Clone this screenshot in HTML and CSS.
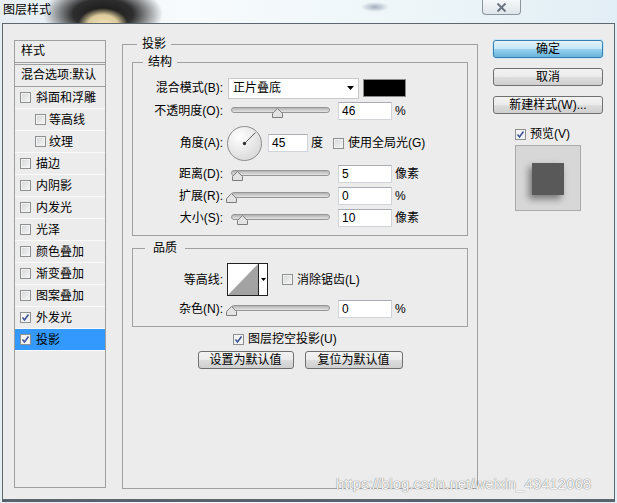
FILE: index.html
```html
<!DOCTYPE html>
<html lang="zh-CN">
<head>
    <meta charset="UTF-8">
    <meta name="viewport" content="width=device-width, initial-scale=1.0">
    <title>图层样式</title>
    <link rel="stylesheet" href="styles.css">
</head>
<body>

    <div class="titlebar">
        <span class="title">图层样式</span>
        <span class="close">
            <svg width="11" height="9" viewBox="0 0 11 9"><path d="M1.5 0.5 L9.5 8.5 M9.5 0.5 L1.5 8.5" stroke="#6b7580" stroke-width="2"/></svg>
        </span>
    </div>

    <div class="dialog">

        <div class="styles-list">
            <div class="list-head">样式</div>
            <div class="list-blend">混合选项:默认</div>
            <div class="item"><span class="cb"></span>斜面和浮雕</div>
            <div class="item sub"><span class="cb"></span>等高线</div>
            <div class="item sub"><span class="cb"></span>纹理</div>
            <div class="item"><span class="cb"></span>描边</div>
            <div class="item"><span class="cb"></span>内阴影</div>
            <div class="item"><span class="cb"></span>内发光</div>
            <div class="item"><span class="cb"></span>光泽</div>
            <div class="item"><span class="cb"></span>颜色叠加</div>
            <div class="item"><span class="cb"></span>渐变叠加</div>
            <div class="item"><span class="cb"></span>图案叠加</div>
            <div class="item"><span class="cb on"><svg width="9" height="9" viewBox="0 0 9 9"><path d="M1.5 4.5 L3.5 7 L7.5 1.5" stroke="#3b5597" stroke-width="1.6" fill="none"/></svg></span>外发光</div>
            <div class="item selected"><span class="cb on"><svg width="9" height="9" viewBox="0 0 9 9"><path d="M1.5 4.5 L3.5 7 L7.5 1.5" stroke="#3b5597" stroke-width="1.6" fill="none"/></svg></span>投影</div>
        </div>

        <fieldset class="group main">
            <legend>投影</legend>

            <fieldset class="group structure">
                <legend>结构</legend>

                <div class="row">
                    <span class="lbl">混合模式(B):</span>
                    <div class="select">正片叠底
                        <svg width="7" height="4" viewBox="0 0 7 4"><path d="M0 0 H7 L3.5 4 Z" fill="#000"/></svg>
                    </div>
                    <div class="swatch"></div>
                </div>

                <div class="row r2">
                    <span class="lbl">不透明度(O):</span>
                    <div class="slider"><div class="track"></div><svg class="thumb" style="left: 46px" width="11" height="10" viewBox="0 0 11 10"><path d="M0.5 9.5 V5.5 L5.5 0.5 L10.5 5.5 V9.5 Z" fill="#e3e3e3" stroke="#7c7c7c"/></svg></div>
                    <div class="num">46</div>
                    <span class="unit">%</span>
                </div>

                <div class="row r3">
                    <span class="lbl">角度(A):</span>
                    <svg class="dial" width="35" height="35" viewBox="0 0 35 35">
                        <defs>
                            <radialGradient id="dialFill" cx="35%" cy="30%" r="75%">
                                <stop offset="0" stop-color="#ffffff"/>
                                <stop offset="1" stop-color="#d9d9d9"/>
                            </radialGradient>
                        </defs>
                        <circle cx="17.5" cy="17.5" r="17" fill="url(#dialFill)" stroke="#8d8d8d"/>
                        <line x1="17.5" y1="17.5" x2="28.5" y2="6.5" stroke="#5a5a5a"/>
                        <circle cx="17.5" cy="17.5" r="1.7" fill="#333"/>
                    </svg>
                    <div class="num angle">45</div>
                    <span class="unit">度</span>
                    <span class="cb global"></span>
                    <span class="cb-text">使用全局光(G)</span>
                </div>

                <div class="row r4">
                    <span class="lbl">距离(D):</span>
                    <div class="slider"><div class="track"></div><svg class="thumb" style="left: 6px" width="11" height="10" viewBox="0 0 11 10"><path d="M0.5 9.5 V5.5 L5.5 0.5 L10.5 5.5 V9.5 Z" fill="#e3e3e3" stroke="#7c7c7c"/></svg></div>
                    <div class="num">5</div>
                    <span class="unit">像素</span>
                </div>

                <div class="row">
                    <span class="lbl">扩展(R):</span>
                    <div class="slider"><div class="track"></div><svg class="thumb" style="left: 0px" width="11" height="10" viewBox="0 0 11 10"><path d="M0.5 9.5 V5.5 L5.5 0.5 L10.5 5.5 V9.5 Z" fill="#e3e3e3" stroke="#7c7c7c"/></svg></div>
                    <div class="num">0</div>
                    <span class="unit">%</span>
                </div>

                <div class="row">
                    <span class="lbl">大小(S):</span>
                    <div class="slider"><div class="track"></div><svg class="thumb" style="left: 11px" width="11" height="10" viewBox="0 0 11 10"><path d="M0.5 9.5 V5.5 L5.5 0.5 L10.5 5.5 V9.5 Z" fill="#e3e3e3" stroke="#7c7c7c"/></svg></div>
                    <div class="num">10</div>
                    <span class="unit">像素</span>
                </div>
            </fieldset>

            <fieldset class="group quality">
                <legend>品质</legend>

                <div class="row contour-row">
                    <span class="lbl">等高线:</span>
                    <div class="contour">
                        <svg class="contour-preview" width="30" height="31" viewBox="0 0 30 31"><path d="M0 31 L30 0 V31 Z" fill="#a3a3a3"/></svg>
                        <span class="contour-arrow"><svg width="5" height="3" viewBox="0 0 5 3"><path d="M0 0 H5 L2.5 3 Z" fill="#000"/></svg></span>
                    </div>
                    <span class="cb aa"></span>
                    <span class="cb-text">消除锯齿(L)</span>
                </div>

                <div class="row r-noise">
                    <span class="lbl">杂色(N):</span>
                    <div class="slider"><div class="track"></div><svg class="thumb" style="left: 0px" width="11" height="10" viewBox="0 0 11 10"><path d="M0.5 9.5 V5.5 L5.5 0.5 L10.5 5.5 V9.5 Z" fill="#e3e3e3" stroke="#7c7c7c"/></svg></div>
                    <div class="num">0</div>
                    <span class="unit">%</span>
                </div>
            </fieldset>

            <div class="knockout">
                <span class="cb on"><svg width="9" height="9" viewBox="0 0 9 9"><path d="M1.5 4.5 L3.5 7 L7.5 1.5" stroke="#3b5597" stroke-width="1.6" fill="none"/></svg></span>
                <span class="cb-text">图层挖空投影(U)</span>
            </div>

            <div class="defaults">
                <button class="btn small">设置为默认值</button>
                <button class="btn small wide">复位为默认值</button>
            </div>
        </fieldset>

        <div class="actions">
            <button class="btn primary">确定</button>
            <button class="btn">取消</button>
            <button class="btn">新建样式(W)...</button>
            <div class="preview-toggle">
                <span class="cb on"><svg width="9" height="9" viewBox="0 0 9 9"><path d="M1.5 4.5 L3.5 7 L7.5 1.5" stroke="#3b5597" stroke-width="1.6" fill="none"/></svg></span>
                <span class="cb-text">预览(V)</span>
            </div>
            <div class="preview">
                <div class="preview-square"></div>
            </div>
        </div>

    </div>

    <div class="watermark">https://blog.csdn.net/weixin_43412068</div>

</body>
</html>
```

FILE: styles.css
```css
* {
    box-sizing: border-box;
}

body {
    margin: 0;
    width: 617px;
    height: 503px;
    overflow: hidden;
    position: relative;
    font-family: "Liberation Sans", "Noto Sans CJK SC", sans-serif;
    font-size: 12px;
    line-height: 16px;
    color: #000;
    background:
        radial-gradient(ellipse 25px 17px at 103px 25px, #f0e4b9 0, #dccb9a 60%, rgba(220, 203, 154, 0) 100%),
        radial-gradient(ellipse 60px 30px at 103px 14px, #151515 0, #2e2e2e 50%, rgba(60, 60, 60, 0) 100%),
        radial-gradient(ellipse 14px 5px at 375px 7px, #a2afbd 0, rgba(162, 175, 189, 0) 100%),
        linear-gradient(90deg, #e6eef3, #f7fbfd 30%, #eef6f9 65%, #e2eef5);
}

/* window frame */

.titlebar {
    height: 23px;
    display: flex;
    align-items: flex-start;
    justify-content: space-between;
    padding-left: 3px;
}

.title {
    margin-top: 3px;
    line-height: 14px;
}

.close {
    width: 39px;
    height: 15px;
    margin-right: 96px;
    border: 1px solid #8d959e;
    border-top: none;
    border-radius: 0 0 4px 4px;
    background: linear-gradient(#f5f8fa, #dfe5ea);
    display: flex;
    align-items: center;
    justify-content: center;
}

.dialog {
    margin-left: 2px;
    width: 613px;
    height: 477px;
    border: 1px solid #5d6770;
    box-shadow: 0 2px 0 #56616b;
    background: #ececec;
    display: flex;
    align-items: flex-start;
    padding: 12px 0 0 11px;
}

/* left list */

.styles-list {
    width: 92px;
    height: 448px;
    margin-top: 4px;
    border: 1px solid #a0a0a0;
    flex: none;
}

.list-head {
    height: 22px;
    line-height: 21px;
    padding-left: 6px;
    border-bottom: 1px solid #a0a0a0;
}

.list-blend {
    height: 23px;
    margin-top: 1px;
    line-height: 21px;
    padding-left: 6px;
    border-top: 1px solid #a0a0a0;
    border-bottom: 1px solid #a0a0a0;
    white-space: nowrap;
}

.item {
    height: 22px;
    display: flex;
    align-items: center;
    padding-left: 5px;
    border-bottom: 1px solid #fafafa;
}

.item .cb {
    margin-right: 5px;
}

.item.sub {
    padding-left: 20px;
}

.item.sub .cb {
    margin-right: 3px;
}

.item.selected {
    background: #3399ff;
}

/* checkboxes */

.cb {
    width: 11px;
    height: 11px;
    flex: none;
    border: 1px solid #8e8f8f;
    background: linear-gradient(135deg, #d2d4d7, #f7f7f7);
    box-shadow: inset 0 0 0 1px #f3f3f3;
    display: flex;
    align-items: center;
    justify-content: center;
}

.cb.on {
    background: #f4f4f4;
}

.cb-text {
    margin-left: 4px;
    white-space: nowrap;
}

/* group boxes */

.group {
    margin: 0;
    min-width: 0;
    border: 1px solid #a0a0a0;
}

.group legend {
    line-height: 16px;
}

.main {
    width: 356px;
    height: 453px;
    margin-left: 16px;
    padding: 2px 9px 0;
    flex: none;
}

.main > legend {
    margin-left: 5px;
    padding: 0 5px;
}

.structure {
    width: 336px;
    padding: 7px 0 6px;
}

.structure > legend {
    margin-left: 10px;
    padding: 0 5px;
}

.quality {
    width: 336px;
    margin-top: 4px;
    padding: 7px 0 6px;
}

.quality > legend {
    margin-left: 12px;
    padding: 0 8px;
}

/* rows */

.row {
    height: 22px;
    display: flex;
    align-items: center;
}

.r2 {
    margin-top: 1px;
}

.r3 {
    margin-top: 3px;
    height: 36px;
}

.r4 {
    margin-top: 2px;
}

.contour-row {
    height: 33px;
}

.r-noise {
    margin-top: 2px;
}

.lbl {
    width: 90px;
    flex: none;
    text-align: right;
    white-space: nowrap;
}

.select {
    width: 131px;
    height: 21px;
    margin-left: 5px;
    padding: 0 4px;
    background: #fff;
    border: 1px solid #c9c9c9;
    display: flex;
    align-items: center;
    justify-content: space-between;
}

.swatch {
    width: 43px;
    height: 18px;
    margin-left: 4px;
    background: #000;
    border: 1px solid #8a8a8a;
}

.slider {
    position: relative;
    width: 108px;
    height: 12px;
    margin: 3px 0 0 3px;
    flex: none;
}

.track {
    width: 99px;
    height: 6px;
    margin-left: 5px;
    border: 1px solid #969696;
    border-radius: 3px;
    background: linear-gradient(#b4b4b4, #e4e4e4);
}

.thumb {
    position: absolute;
    top: 1px;
}

.num {
    width: 54px;
    height: 18px;
    margin-left: 4px;
    padding-left: 3px;
    background: #fff;
    border: 1px solid #d0d3d7;
    border-top-color: #a9adb3;
    line-height: 16px;
    flex: none;
}

.unit {
    margin-left: 3px;
}

.dial {
    margin-left: 4px;
    flex: none;
}

.num.angle {
    width: 40px;
    margin-left: 6px;
}

.cb.global {
    margin-left: 10px;
}

.contour {
    width: 41px;
    height: 33px;
    margin-left: 4px;
    border: 1px solid #222;
    background: #fff;
    display: flex;
    flex: none;
}

.contour-preview {
    border-right: 1px solid #222;
    width: 31px;
    flex: none;
}

.contour-arrow {
    flex: 1;
    display: flex;
    align-items: center;
    justify-content: center;
}

.cb.aa {
    margin-left: 14px;
}

.knockout {
    height: 18px;
    margin: 3px 0 0 101px;
    display: flex;
    align-items: center;
}

.defaults {
    margin-top: 3px;
    display: flex;
    justify-content: center;
    gap: 11px;
}

/* buttons */

.btn {
    display: block;
    width: 110px;
    height: 18px;
    padding: 0;
    font: inherit;
    line-height: 16px;
    color: #000;
    text-align: center;
    border: 1px solid #707070;
    border-radius: 3px;
    background: linear-gradient(#f2f2f2, #ebebeb 50%, #dddddd 51%, #cfcfcf);
}

.btn.small {
    width: 96px;
}

.btn.small.wide {
    width: 98px;
}

.btn.primary {
    border-color: #3c7fb1;
    background: linear-gradient(#e5f4fc, #c4e5f6 50%, #98d1ef 51%, #68b3db);
    box-shadow: 0 0 0 1px #c9e6f7;
}

.actions {
    width: 110px;
    margin: 4px 0 0 15px;
    flex: none;
}

.actions .btn + .btn {
    margin-top: 10px;
}

.preview-toggle {
    height: 14px;
    margin: 13px 0 0 22px;
    display: flex;
    align-items: center;
}

.preview {
    width: 66px;
    height: 66px;
    margin: 4px 0 0 22px;
    border: 1px solid #aaaaaa;
    background: #d7d7d7;
    padding: 17px 0 0 16px;
}

.preview-square {
    width: 32px;
    height: 32px;
    background: #595959;
    box-shadow: -3px 4px 7px rgba(0, 0, 0, 0.45);
}

.watermark {
    position: absolute;
    left: 336px;
    top: 475px;
    font-family: "Liberation Sans", sans-serif;
    font-size: 15px;
    line-height: 17px;
    color: #f6f6f6;
    text-shadow: 0 0 1px #8a8a8a, 0 0 1px #8a8a8a;
    white-space: nowrap;
}
```
